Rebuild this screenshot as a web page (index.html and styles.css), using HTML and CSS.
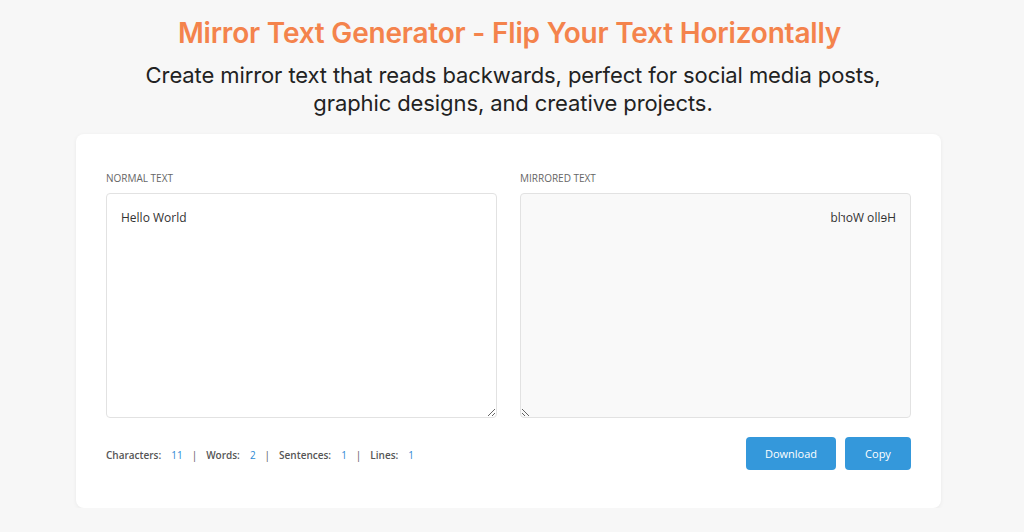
FILE: index.html
```html
<!DOCTYPE html>
<html lang="en">
<head>
<meta charset="utf-8">
<title>Mirror Text Generator</title>
<link rel="stylesheet" href="styles.css">
</head>
<body>
<header class="hero">
  <h1 class="title">Mirror Text Generator - Flip Your Text Horizontally</h1>
  <p class="subtitle">Create mirror text that reads backwards, perfect for social media posts,<br>graphic designs, and creative projects.</p>
</header>
<main class="card">
  <div class="panes">
    <div class="pane">
      <label class="label" for="in">Normal Text</label>
      <textarea id="in" class="box">Hello World</textarea>
    </div>
    <div class="pane">
      <label class="label" for="out">Mirrored Text</label>
      <textarea id="out" class="box box-mirror" readonly>Hello World</textarea>
    </div>
  </div>
  <div class="footer">
    <div class="stats">
      <span class="stat">Characters:</span><span class="num">11</span><span class="sep">|</span>
      <span class="stat">Words:</span><span class="num">2</span><span class="sep">|</span>
      <span class="stat">Sentences:</span><span class="num">1</span><span class="sep">|</span>
      <span class="stat">Lines:</span><span class="num">1</span>
    </div>
    <div class="actions">
      <button class="btn btn-download">Download</button>
      <button class="btn btn-copy">Copy</button>
    </div>
  </div>
</main>
</body>
</html>
```
FILE: styles.css
```css
* { box-sizing: border-box; }
html, body { margin: 0; padding: 0; }
body {
  background: #f7f7f7;
  font-family: "Open Sans", "Noto Sans", sans-serif;
  color: #333;
}
.hero {
  text-align: center;
  padding-top: 15px;
}
.title {
  margin: 0;
  padding-right: 5px;
  font-family: Inter, "Noto Sans", sans-serif;
  font-weight: 600;
  font-size: 28px;
  line-height: 36px;
  color: #f4834c;
  letter-spacing: -0.2px;
}
.subtitle {
  margin: 10px 0 0;
  padding-left: 2px;
  font-family: Inter, "Noto Sans", sans-serif;
  font-weight: 400;
  font-size: 22px;
  line-height: 28px;
  color: #222;
  letter-spacing: -0.1px;
}
.card {
  width: 865px;
  margin: 17px 0 0 76px;
  background: #fff;
  border-radius: 8px;
  box-shadow: 0 1px 4px rgba(0,0,0,0.06);
  padding: 37px 30px 38px;
}
.panes {
  display: flex;
  gap: 23px;
}
.pane {
  flex: 1;
  display: flex;
  flex-direction: column;
}
.label {
  font-size: 10px;
  line-height: 14px;
  color: #666;
  text-transform: uppercase;
  margin-bottom: 8px;
}
.box {
  height: 225px;
  border: 1px solid #e2e2e2;
  border-radius: 4px;
  padding: 15px 14px;
  font-family: "Open Sans", "Noto Sans", sans-serif;
  font-size: 12px;
  line-height: 18px;
  color: #333;
  background: #fff;
  outline: none;
}
.box-mirror {
  background: #f9f9f9;
  transform: scaleX(-1);
}
.footer {
  display: flex;
  justify-content: space-between;
  align-items: center;
  margin-top: 19px;
}
.stats {
  display: flex;
  align-items: center;
  padding-top: 2px;
  font-size: 10px;
  color: #555;
}
.stat { font-weight: 600; color: #555; }
.num { color: #2f8ad4; margin-left: 10px; }
.sep { color: #555; margin: 0 9px; }
.actions {
  display: flex;
  gap: 9px;
}
.btn {
  height: 33px;
  border: none;
  border-radius: 4px;
  background: #3498db;
  color: #fff;
  font-family: "Open Sans", "Noto Sans", sans-serif;
  font-size: 11px;
  cursor: pointer;
}
.btn-download { width: 90px; }
.btn-copy { width: 66px; }
```
